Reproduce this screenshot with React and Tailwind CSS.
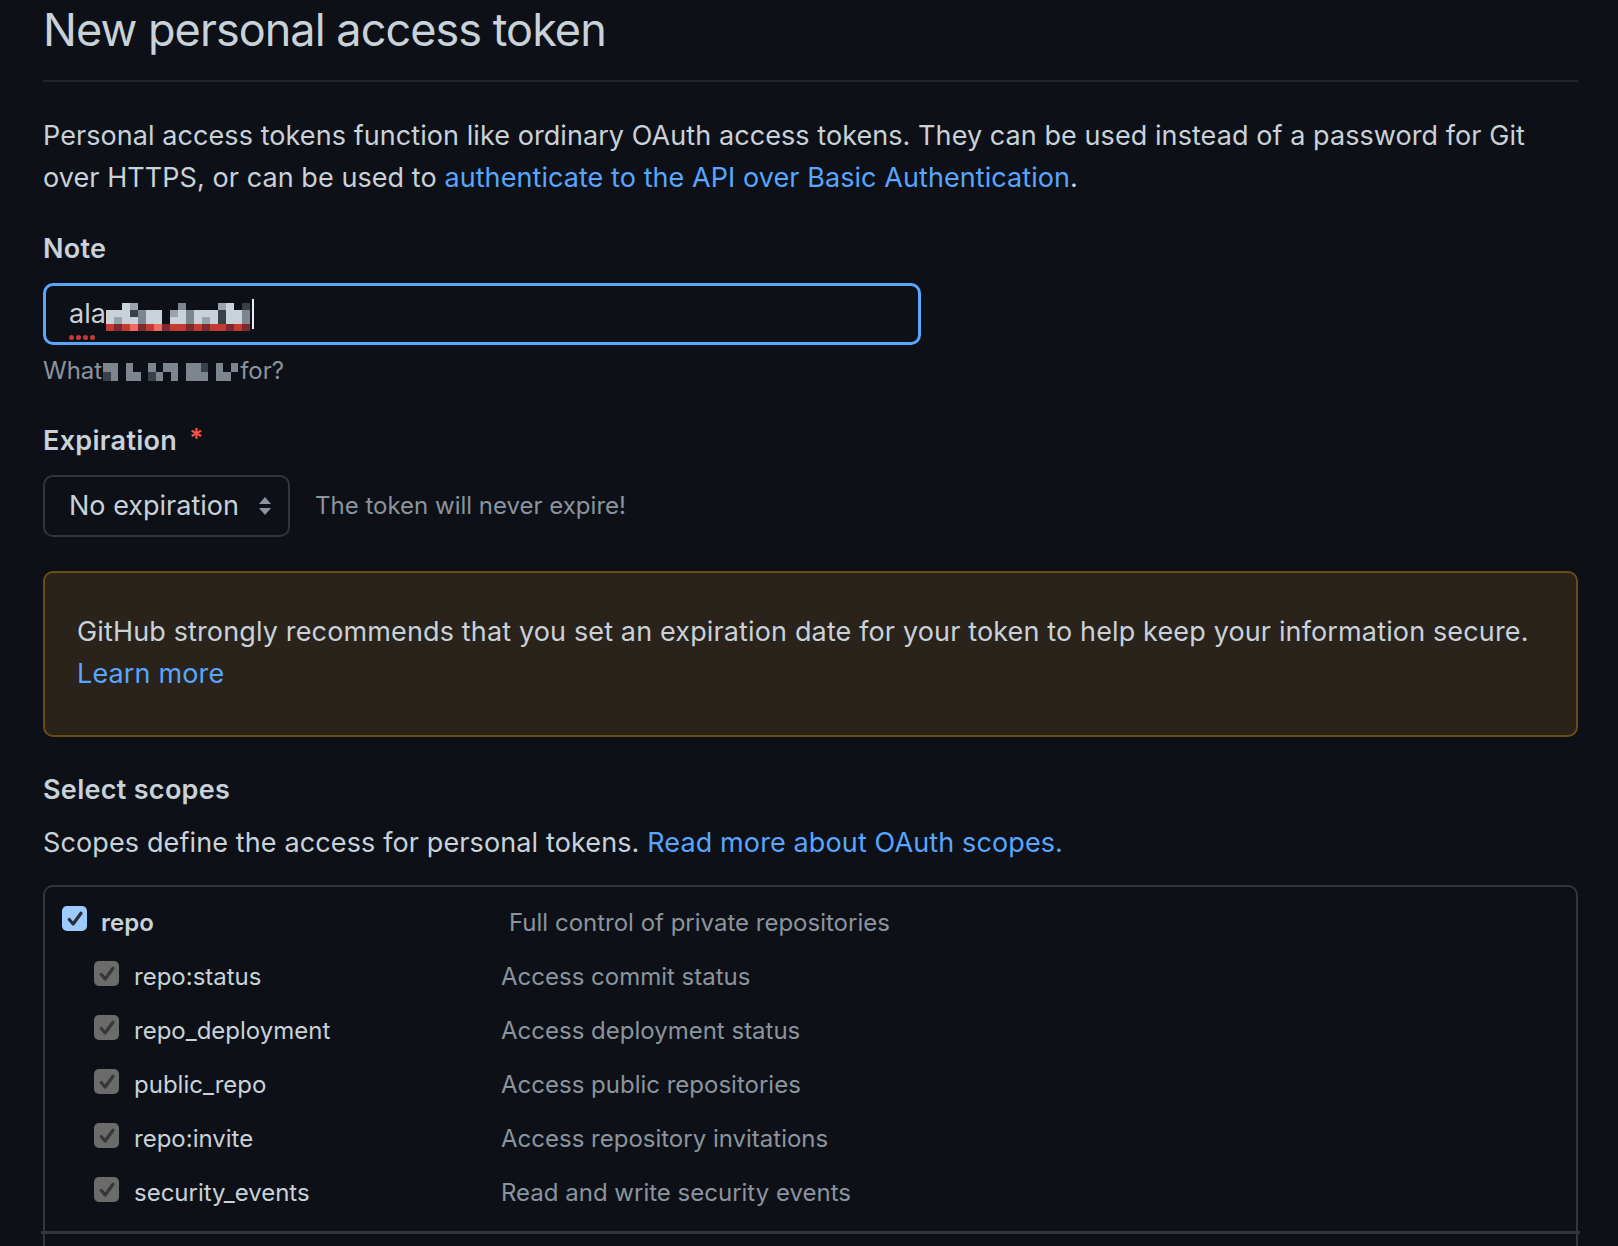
import React from 'react';

const NOTE_MOSAIC = [
  '..Ll.....m....lL.d',
  'LLLdmLL.lLmLLLdLLm',
  'LlLLmLL.LLmLlLdLLm',
  'RrRPrRPrRRrRrRRrRr',
];

const HELP_MOSAIC = [
  'mm.m..m.mm.mmd.m.m',
  'dm.mm.dm.m.mmm.mm.',
];

const CELL = {
  '.': 'bg-transparent',
  L: 'bg-[#c9d1d9]',
  l: 'bg-[#9aa2ab]',
  m: 'bg-[#7d858e]',
  d: 'bg-[#3a4048]',
  R: 'bg-[#c43a34]',
  r: 'bg-[#7e2a2a]',
  P: 'bg-[#f06b62]',
};

function Mosaic({ rows, cell = 'w-[8px] h-[8px]' }) {
  return (
    <span className="inline-flex flex-col align-middle">
      {rows.map((row, i) => (
        <span key={i} className="flex">
          {row.split('').map((c, j) => (
            <span key={j} className={`${cell} ${CELL[c]}`} />
          ))}
        </span>
      ))}
    </span>
  );
}

function Check({ on }) {
  return (
    <span
      className={`flex h-[25px] w-[25px] shrink-0 items-center justify-center rounded-[5px] ${
        on ? 'bg-[#9ecbff]' : 'bg-[#6b6b6b]'
      }`}
    >
      <svg viewBox="0 0 16 16" className="h-[20px] w-[20px]">
        <path
          d="M3.4 8.4 L6.5 12 L12.8 3.4"
          fill="none"
          stroke={on ? '#2b2f34' : '#383838'}
          strokeWidth="2.6"
          strokeLinecap="round"
          strokeLinejoin="round"
        />
      </svg>
    </span>
  );
}

const subScopes = [
  ['repo:status', 'Access commit status'],
  ['repo_deployment', 'Access deployment status'],
  ['public_repo', 'Access public repositories'],
  ['repo:invite', 'Access repository invitations'],
  ['security_events', 'Read and write security events'],
];

export default function App() {
  return (
    <div className="h-[1246px] overflow-hidden bg-[#0d1117] pl-[43px] pr-[40px] font-['Inter',sans-serif] text-[#c9d1d9]">
      {/* Header */}
      <h1 className="pt-[2px] text-[45px] leading-[56px] font-normal tracking-[-0.95px]">
        New personal access token
      </h1>
      <div className="mt-[22px] h-[2px] bg-[#21262d]" />

      <p className="mt-[33px] text-[27px] leading-[42px] tracking-[0.07px]">
        Personal access tokens function like ordinary OAuth access tokens. They can be used instead of a password for Git
        <br />
        over HTTPS, or can be used to{' '}
        <a className="text-[#58a6ff]">authenticate to the API over Basic Authentication</a>.
      </p>

      {/* Note */}
      <div className="mt-[32px] text-[27px] leading-[36px] font-semibold tracking-[0.3px]">Note</div>
      <div className="mt-[16px] flex h-[62px] w-[878px] items-center rounded-[10px] border-[3px] border-[#58a6ff] pl-[23px] text-[27px]">
        <span className="relative">
          ala
          <span className="absolute -bottom-[6px] left-0 flex gap-[2px]">
            <span className="h-[5px] w-[5px] rounded-full bg-[#c43a34]" />
            <span className="h-[5px] w-[5px] rounded-full bg-[#c43a34]" />
            <span className="h-[5px] w-[5px] rounded-full bg-[#c43a34]" />
            <span className="h-[5px] w-[5px] rounded-full bg-[#c43a34]" />
          </span>
        </span>
        <span className="mt-[4px]">
          <Mosaic rows={NOTE_MOSAIC} cell="w-[8px] h-[7px]" />
        </span>
        <span className="ml-[2px] h-[30px] w-[2px] bg-[#e6edf3]" />
      </div>
      <div className="mt-[10px] flex items-center text-[24px] leading-[32px] text-[#8b949e]">
        <span>What</span>
        <span className="ml-[1px] mr-[2px]">
          <Mosaic rows={HELP_MOSAIC} cell="w-[7.5px] h-[9px]" />
        </span>
        <span>for?</span>
      </div>

      {/* Expiration */}
      <div className="mt-[36px] flex text-[27px] leading-[36px] font-semibold tracking-[0.3px]">
        <span>Expiration</span>
        <span className="ml-[12px] -mt-[3px] text-[26px] text-[#f85149]">*</span>
      </div>
      <div className="mt-[16px] flex items-center">
        <div className="flex h-[62px] w-[247px] items-center rounded-[10px] border-2 border-[#30363d] pl-[24px] text-[27px]">
          <span>No expiration</span>
          <svg viewBox="0 0 14 20" className="ml-[19px] h-[22px] w-[14px]">
            <path d="M7 1 L13 8 H1 Z" fill="#8b949e" />
            <path d="M7 19 L13 12 H1 Z" fill="#8b949e" />
          </svg>
        </div>
        <span className="ml-[25px] text-[24px] text-[#8b949e]">The token will never expire!</span>
      </div>

      {/* Warning */}
      <div className="mt-[34px] h-[166px] rounded-[10px] border-2 border-[#6a4c14] bg-[#2a231b] pl-[32px] pt-[38px] text-[27px] leading-[42px] tracking-[0.14px]">
        GitHub strongly recommends that you set an expiration date for your token to help keep your information secure.
        <br />
        <a className="text-[#58a6ff]">Learn more</a>
      </div>

      {/* Scopes */}
      <div className="mt-[35px] text-[27px] leading-[36px] font-semibold tracking-[0.3px]">Select scopes</div>
      <p className="mt-[14px] text-[27px] leading-[42px] tracking-[0.12px]">
        Scopes define the access for personal tokens.{' '}
        <a className="text-[#58a6ff]">Read more about OAuth scopes.</a>
      </p>

      <div className="mt-[21px] h-[400px] rounded-t-[10px] border-x-2 border-t-2 border-[#30363d] pt-[9px]">
        <div className="flex h-[54px] items-start text-[24px] leading-[54px]">
          <div className="flex w-[464px] shrink-0 items-start">
            <span className="ml-[17px] mt-[10px]">
              <Check on />
            </span>
            <span className="ml-[14px] font-semibold">repo</span>
          </div>
          <span className="text-[#8b949e]">Full control of private repositories</span>
        </div>
        {subScopes.map(([name, desc]) => (
          <div key={name} className="flex h-[54px] items-start text-[24px] leading-[54px]">
            <div className="flex w-[456px] shrink-0 items-start">
              <span className="ml-[49px] mt-[11px]">
                <Check />
              </span>
              <span className="ml-[15px]">{name}</span>
            </div>
            <span className="text-[#8b949e]">{desc}</span>
          </div>
        ))}
        <div className="mx-[-4px] mt-[11px] h-[3px] bg-[#30363d]" />
      </div>
    </div>
  );
}
